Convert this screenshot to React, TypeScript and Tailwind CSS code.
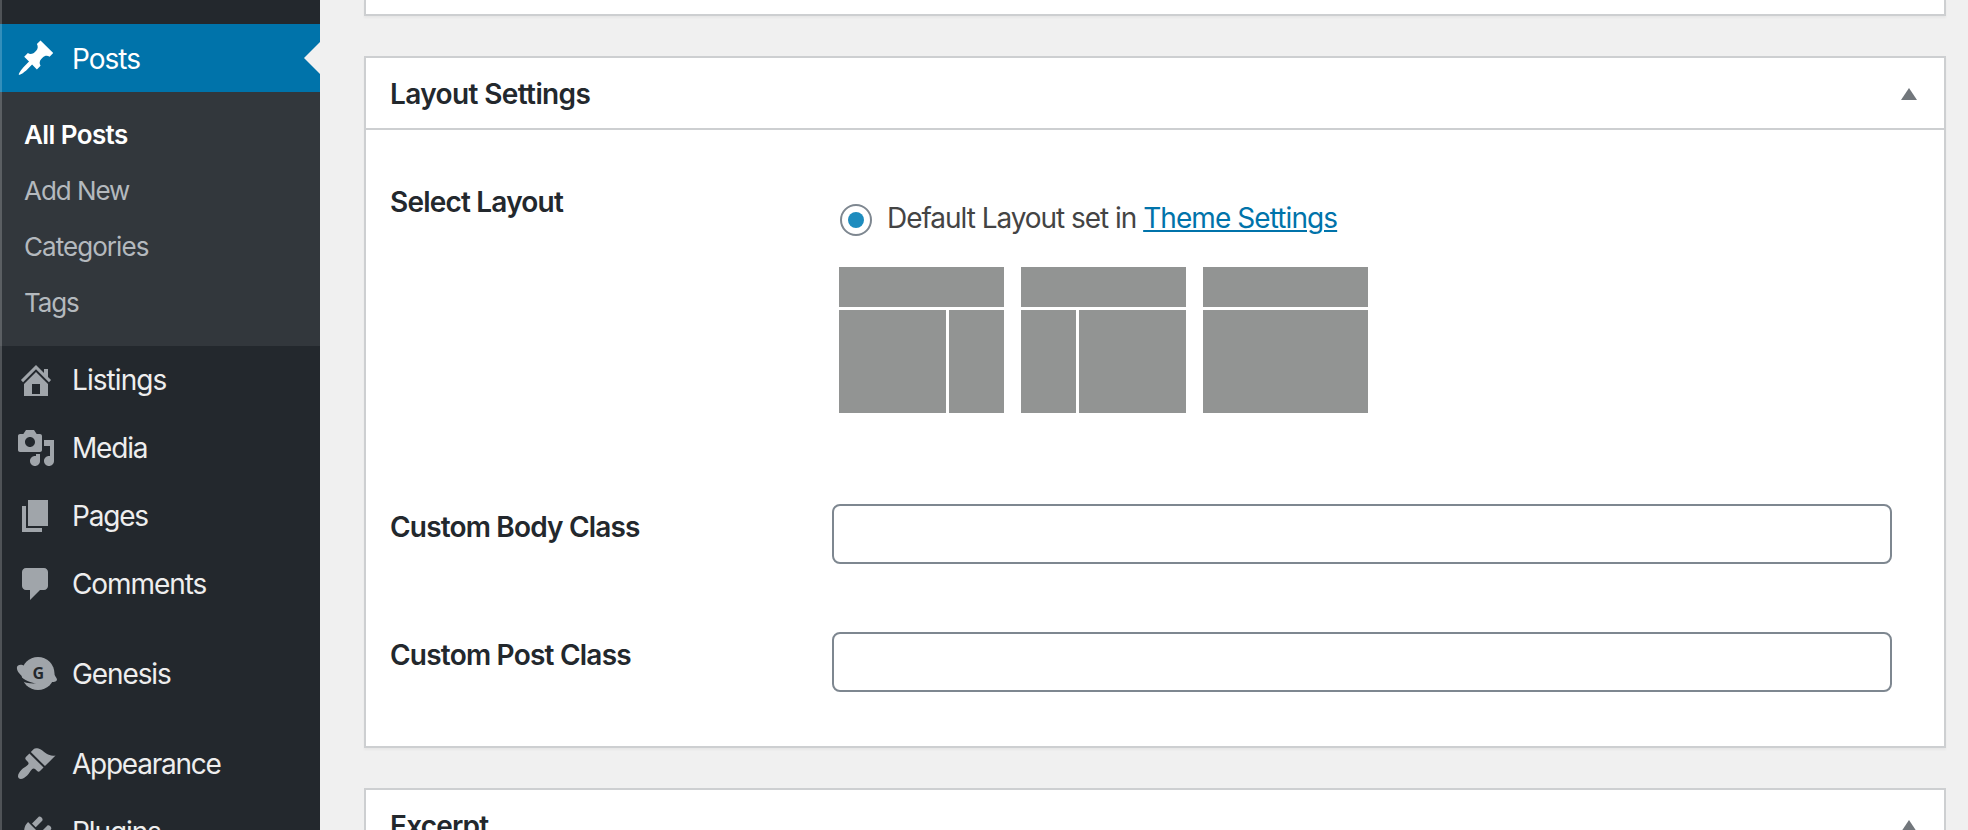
import type { ReactNode } from "react";

const POSTS =
  "M10.44 3.02l1.82-1.82 6.36 6.35-1.83 1.82c-1.05-.68-2.48-.57-3.41.36l-.75.75c-.92.93-1.04 2.35-.35 3.41l-1.83 1.82-2.41-2.41-2.8 2.79c-.42.42-3.38 2.71-3.8 2.29s1.86-3.39 2.28-3.81l2.79-2.79L4.1 9.36l1.83-1.82c1.05.69 2.48.57 3.4-.36l.75-.75c.93-.92 1.05-2.35.36-3.41z";
const HOME =
  "M16 8.5l1.53 1.53-1.06 1.06L10 4.6l-6.47 6.49-1.06-1.06L10 2.5l4 4v-2h2v4zm-6-2.46l6 5.99V18H4v-5.97zM12 17v-5H8v5h4z";
const MEDIA =
  "M13 11V4c0-.55-.45-1-1-1h-1.67L9 1H5L3.67 3H2c-.55 0-1 .45-1 1v7c0 .55.45 1 1 1h10c.55 0 1-.45 1-1zM7 4.5c1.38 0 2.5 1.12 2.5 2.5S8.38 9.5 7 9.5 4.5 8.38 4.5 7 5.62 4.5 7 4.5zM14 6h5v10.5c0 1.38-1.12 2.5-2.5 2.5S14 17.88 14 16.5s1.12-2.5 2.5-2.5c.17 0 .34.02.5.05V9h-3V6zm-4 8.05V13h2v3.5c0 1.38-1.12 2.5-2.5 2.5S7 17.88 7 16.5 8.12 14 9.5 14c.17 0 .34.02.5.05z";
const PAGES = "M6 15V2h10v13H6zm-1 1h8v2H3V5h2v11z";
const COMMENTS =
  "M5 2h9c1.1 0 2 .9 2 2v7c0 1.1-.9 2-2 2h-2l-5 5v-5H5c-1.1 0-2-.9-2-2V4c0-1.1.9-2 2-2z";
const APPEARANCE =
  "M14.48 11.06L7.41 3.99l1.5-1.5c.5-.56 2.3-.47 3.51.32 1.21.8 1.43 1.28 2.91 2.1 1.18.64 2.45 1.26 4.45.85zm-.71.71L6.7 4.7 4.93 6.47c-.39.39-.39 1.02 0 1.41l1.06 1.06c.39.39.39 1.03 0 1.42-.6.6-1.43 1.11-2.21 1.69-.35.26-.7.53-1.01.84C1.43 14.23.4 16.08 1.4 17.07c.99 1 2.84-.03 4.18-1.36.31-.31.58-.66.85-1.02.57-.78 1.08-1.61 1.69-2.21.39-.39 1.02-.39 1.41 0l1.06 1.06c.39.39 1.02.39 1.41 0z";
const PLUGINS =
  "M13.11 4.36L9.87 7.6 8 5.73l3.24-3.24c.35-.34 1.05-.2 1.56.32.52.51.66 1.21.31 1.55zm-8 1.77l.91-1.12 9.01 9.01-1.19.84c-.71.71-2.63 1.16-3.82 1.16H6.14L4.9 17.26c-.59.59-1.54.59-2.12 0-.59-.58-.59-1.53 0-2.12l1.24-1.24v-3.88c0-1.13.4-3.19 1.09-3.89zm7.26 3.97l3.24-3.24c.34-.35 1.04-.21 1.55.31.52.51.66 1.21.31 1.55l-3.24 3.25z";

function Dashicon({ d }: { d: string }) {
  return (
    <svg viewBox="0 0 20 20" className="size-10 shrink-0 fill-current">
      <path d={d} />
    </svg>
  );
}

function GenesisIcon() {
  return (
    <svg viewBox="0 0 40 40" className="size-10 shrink-0 overflow-visible fill-current">
      <circle cx="22" cy="19.5" r="16.5" />
      <path d="M2 19C5 24.500 13 29 20.500 29.300C16 29.700 9 29.500 4 26Z" className="fill-[#23282d]" />
      <path d="M6.500 11C3.500 10.300 1.200 11.300 0.900 13.500C0.700 17.500 4.500 21.500 9.500 24.300C13 26.300 17 28.200 20.500 28.600L24 20Z" />
      <path d="M37.500 19C38.500 21.500 41 24 41 25.800C40.500 27.800 37.500 28.200 33.500 28.200L30 22Z" />
      <text x="22.300" y="25.300" textAnchor="middle" className="fill-[#23282d] font-['Open_Sans'] text-[16px] font-bold">
        G
      </text>
    </svg>
  );
}

function MenuItem({ icon, label, spacing }: { icon: ReactNode; label: string; spacing: string }) {
  return (
    <li className="flex h-17 items-center gap-4 pl-4 text-[#a0a5aa]">
      {icon}
      <span className={`text-[28px] leading-9 text-[#eee] ${spacing}`}>{label}</span>
    </li>
  );
}

function Sidebar() {
  return (
    <nav className="relative w-80 shrink-0 bg-[#23282d] pt-6">
      <div className="flex h-17 items-center justify-between bg-[#0073aa] pl-4 text-white">
        <div className="flex items-center gap-4">
          <Dashicon d={POSTS} />
          <span className="pt-0.5 text-[28px] leading-9 tracking-[-1px]">Posts</span>
        </div>
        <svg viewBox="0 0 16 32" className="h-8 w-4 fill-[#f1f1f1]">
          <path d="M16 0v32L0 16z" />
        </svg>
      </div>
      <ul className="h-[254px] bg-[#32373c] pt-[15px] pl-6 text-[26px] leading-14 text-[#b4b9be]">
        <li className="font-semibold tracking-[-0.6px] text-white">All Posts</li>
        <li className="tracking-[-1.05px]">Add New</li>
        <li className="tracking-[-0.95px]">Categories</li>
        <li className="tracking-[-1.1px]">Tags</li>
      </ul>
      <ul>
        <MenuItem icon={<Dashicon d={HOME} />} label="Listings" spacing="tracking-[-0.93px]" />
        <MenuItem icon={<Dashicon d={MEDIA} />} label="Media" spacing="tracking-[-1.2px]" />
        <MenuItem icon={<Dashicon d={PAGES} />} label="Pages" spacing="tracking-[-1.2px]" />
        <MenuItem icon={<Dashicon d={COMMENTS} />} label="Comments" spacing="tracking-[-1.08px]" />
      </ul>
      <ul className="pt-[22px]">
        <MenuItem icon={<GenesisIcon />} label="Genesis" spacing="tracking-[-1.1px]" />
      </ul>
      <ul className="pt-[22px]">
        <MenuItem icon={<Dashicon d={APPEARANCE} />} label="Appearance" spacing="tracking-[-1.25px]" />
        <MenuItem icon={<Dashicon d={PLUGINS} />} label="Plugins" spacing="tracking-[-1.1px]" />
      </ul>
      <div className="absolute inset-y-0 left-0 w-0.5 bg-white/20" />
    </nav>
  );
}

function PanelHeader({ title, spacing }: { title: string; spacing: string }) {
  return (
    <header className="flex h-18 items-center justify-between border-b-2 border-[#cdcfd1] pt-0.5 pr-[27px] pl-6">
      <h2 className={`text-[28px] leading-9 font-semibold text-[#23282d] ${spacing}`}>{title}</h2>
      <svg viewBox="0 0 16 12" className="h-3 w-4 fill-[#72777c]">
        <path d="M8 0l8 12H0z" />
      </svg>
    </header>
  );
}

const block = "bg-[#929493]";

function Thumb({ children }: { children: ReactNode }) {
  return (
    <div className="flex h-[146px] w-[165px] flex-col gap-[3px]">
      <div className={`h-10 ${block}`} />
      <div className="flex flex-1 gap-[3px]">{children}</div>
    </div>
  );
}

function Field({ label, spacing }: { label: string; spacing: string }) {
  return (
    <div className="flex h-32">
      <label className={`w-[442px] shrink-0 pt-[5px] text-[28px] leading-9 font-semibold text-[#23282d] ${spacing}`}>
        {label}
      </label>
      <input type="text" className="h-15 w-[1060px] rounded-lg border-2 border-[#7e8790] bg-white px-4 text-[28px]" />
    </div>
  );
}

export default function App() {
  return (
    <div className="flex h-[830px] w-[1968px] overflow-hidden bg-[#f0f0f0] font-[Inter,sans-serif]">
      <Sidebar />
      <main className="flex flex-1 flex-col gap-10 pr-[22px] pl-11">
        <section className="h-4 shrink-0 border-2 border-t-0 border-[#cdcfd1] bg-white shadow-[0_2px_2px_rgba(0,0,0,0.04)]" />
        <section className="h-[692px] shrink-0 border-2 border-[#cdcfd1] bg-white shadow-[0_2px_2px_rgba(0,0,0,0.04)]">
          <PanelHeader title="Layout Settings" spacing="tracking-[-0.62px]" />
          <div className="pl-6">
            <div className="flex h-[374px]">
              <div className="w-[442px] shrink-0 pt-[54px] text-[28px] leading-9 font-semibold tracking-[-0.8px] text-[#23282d]">
                Select Layout
              </div>
              <div className="pt-[70px] pl-2">
                <label className="flex h-10 items-center gap-[15px]">
                  <span className="flex size-8 items-center justify-center rounded-full border-2 border-[#7e8790] bg-white">
                    <span className="size-4 rounded-full bg-[#1e8cbe]" />
                  </span>
                  <span className="pb-1 text-[28px] leading-9 tracking-[-1.04px] text-[#444]">
                    Default Layout set in{" "}
                    <a
                      href="#"
                      className="tracking-[-0.92px] text-[#0073aa] underline decoration-2 underline-offset-2"
                    >
                      Theme Settings
                    </a>
                  </span>
                </label>
                <div className="-ml-px flex gap-[17px] pt-[27px]">
                  <Thumb>
                    <div className={`w-[107px] ${block}`} />
                    <div className={`flex-1 ${block}`} />
                  </Thumb>
                  <Thumb>
                    <div className={`w-[55px] ${block}`} />
                    <div className={`flex-1 ${block}`} />
                  </Thumb>
                  <Thumb>
                    <div className={`flex-1 ${block}`} />
                  </Thumb>
                </div>
              </div>
            </div>
            <Field label="Custom Body Class" spacing="tracking-[-0.82px]" />
            <Field label="Custom Post Class" spacing="tracking-[-0.78px]" />
          </div>
        </section>
        <section className="h-[200px] shrink-0 border-2 border-[#cdcfd1] bg-white">
          <PanelHeader title="Excerpt" spacing="tracking-[-0.8px]" />
        </section>
      </main>
    </div>
  );
}
